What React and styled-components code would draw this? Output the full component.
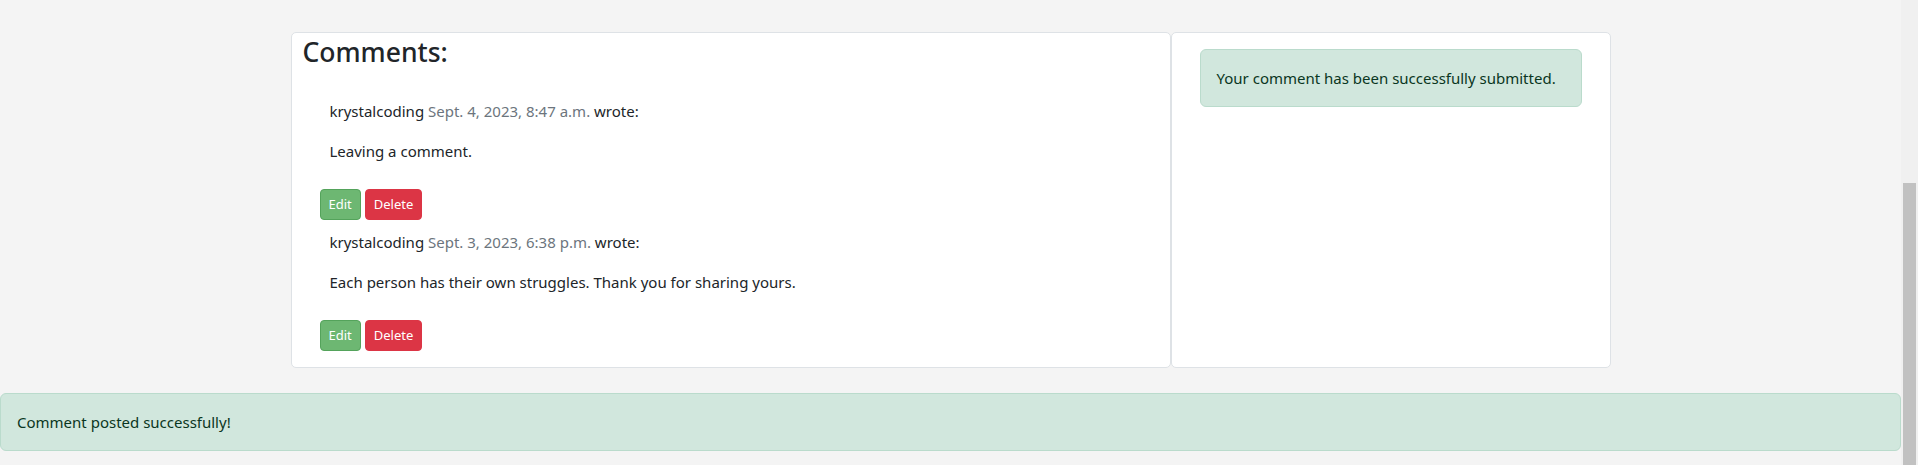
import styled, { createGlobalStyle } from "styled-components";

const GlobalStyle = createGlobalStyle`
  html, body {
    margin: 0;
    padding: 0;
    background: #f4f4f4;
    font-family: "Noto Sans", "Open Sans", sans-serif;
    color: #212529;
    overflow: hidden;
  }
  * { box-sizing: border-box; }
`;

export const Viewport = styled.div`
  display: flex;
  height: 465px;
`;

export const Page = styled.main`
  flex: 1;
  padding-top: 32px;
`;

export const Scrollbar = styled.div`
  width: 17px;
  background: #f0f0f0;
  display: flex;
  flex-direction: column;
  padding: 183px 2px 0 2px;
`;

export const Thumb = styled.div`
  flex: 1;
  background: #c1c1c1;
`;

export const Container = styled.div`
  width: 1320px;
  margin: 0 auto;
  display: grid;
  grid-template-columns: 880px 440px;
`;

export const Card = styled.section`
  background: #fff;
  border: 1px solid #dee2e6;
  border-radius: 5px;
  padding: ${(p) => p.$pad || "0"};
  min-height: 335px;
`;

export const Heading = styled.h2`
  font-size: 26.5px;
  font-weight: 500;
  line-height: 38px;
  margin: 0 0 0 11px;
  color: #212529;
`;

export const CommentList = styled.div`
  display: flex;
  flex-direction: column;
  gap: 10px;
  margin-top: 28px;
  padding: 0 0 16px 28px;
`;

export const CommentBlock = styled.article`
  display: flex;
  flex-direction: column;
`;

export const Text = styled.p`
  font-size: 15px;
  line-height: 24px;
  margin: 0 0 ${(p) => p.$mb || 16}px 10px;
`;

export const Muted = styled.span`
  color: #6c757d;
`;

export const Actions = styled.div`
  display: flex;
  gap: 4px;
`;

export const Button = styled.button`
  font-family: inherit;
  font-size: 13px;
  line-height: 21px;
  padding: 4px 8px;
  border-radius: 4px;
  color: #fff;
  cursor: pointer;
  border: 1px solid ${(p) => (p.$variant === "danger" ? "#dc3545" : "#54a35b")};
  background: ${(p) => (p.$variant === "danger" ? "#dc3545" : "#6db772")};
`;

export const Alert = styled.div`
  background: #d1e7dd;
  border: 1px solid #badbcc;
  border-radius: 6px;
  color: #0a3622;
  font-size: 15px;
  line-height: 24px;
  padding: 16px;
  margin: ${(p) => p.$margin || "0"};
`;

const comments = [
  { author: "krystalcoding", date: "Sept. 4, 2023, 8:47 a.m.", body: "Leaving a comment." },
  {
    author: "krystalcoding",
    date: "Sept. 3, 2023, 6:38 p.m.",
    body: "Each person has their own struggles. Thank you for sharing yours.",
  },
];

function Comment({ author, date, body }) {
  return (
    <CommentBlock>
      <Text>
        {author} <Muted>{date}</Muted> wrote:
      </Text>
      <Text $mb={26}>{body}</Text>
      <Actions>
        <Button>Edit</Button>
        <Button $variant="danger">Delete</Button>
      </Actions>
    </CommentBlock>
  );
}

export default function App() {
  return (
    <>
      <GlobalStyle />
      <Viewport>
        <Page>
          <Container>
            <Card>
              <Heading>Comments:</Heading>
              <CommentList>
                {comments.map((c, i) => (
                  <Comment key={i} {...c} />
                ))}
              </CommentList>
            </Card>
            <Card $pad="16px 28px">
              <Alert>Your comment has been successfully submitted.</Alert>
            </Card>
          </Container>
          <Alert $margin="25px 0 0 0">Comment posted successfully!</Alert>
        </Page>
        <Scrollbar>
          <Thumb />
        </Scrollbar>
      </Viewport>
    </>
  );
}
